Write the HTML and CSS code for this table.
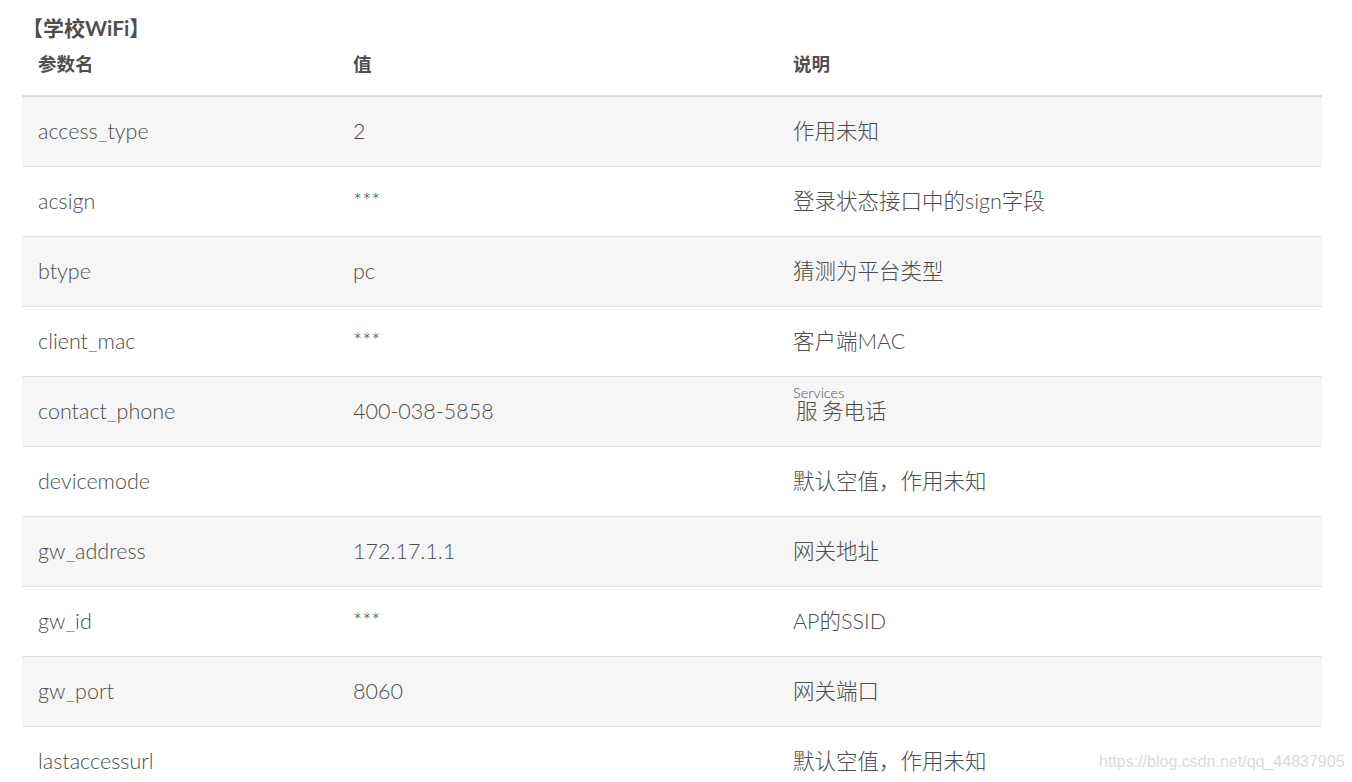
FILE: index.html
```html
<!DOCTYPE html>
<html lang="zh-CN">
<head>
<meta charset="utf-8">
<title>学校WiFi</title>
<link rel="stylesheet" href="styles.css">
</head>
<body>
<div class="page">
  <h3 class="title">【学校WiFi】</h3>
  <table class="params">
    <thead>
      <tr><th class="c1">参数名</th><th class="c2">值</th><th class="c3">说明</th></tr>
    </thead>
    <tbody>
      <tr><td>access_type</td><td>2</td><td>作用未知</td></tr>
      <tr><td>acsign</td><td>***</td><td>登录状态接口中的sign字段</td></tr>
      <tr><td>btype</td><td>pc</td><td>猜测为平台类型</td></tr>
      <tr><td>client_mac</td><td>***</td><td>客户端MAC</td></tr>
      <tr><td>contact_phone</td><td>400-038-5858</td><td><span class="rb"><span class="rt">Services</span><span class="sp">服</span>务</span>电话</td></tr>
      <tr><td>devicemode</td><td></td><td>默认空值，作用未知</td></tr>
      <tr><td>gw_address</td><td>172.17.1.1</td><td>网关地址</td></tr>
      <tr><td>gw_id</td><td>***</td><td>AP的SSID</td></tr>
      <tr><td>gw_port</td><td>8060</td><td>网关端口</td></tr>
      <tr><td>lastaccessurl</td><td></td><td>默认空值，作用未知</td></tr>
    </tbody>
  </table>
  <div class="watermark">https://blog.csdn.net/qq_44837905</div>
</div>
</body>
</html>
```

FILE: styles.css
```css
html, body {
  margin: 0;
  padding: 0;
  background: #fff;
}
body {
  font-family: Lato, "Noto Sans CJK SC", sans-serif;
  color: #4d4d4d;
  overflow: hidden;
}
.page {
  padding: 0 30px 0 22px;
  height: 782px;
  overflow: hidden;
}
.title {
  margin: 0;
  padding-top: 16px;
  height: 24px;
  line-height: 24px;
  font-size: 21px;
  font-weight: 700;
  color: #4f4f4f;
}
.params {
  border-collapse: collapse;
  width: 1300px;
  table-layout: fixed;
}
.params th {
  text-align: left;
  font-size: 18.5px;
  font-weight: 700;
  line-height: 24px;
  padding: 12px 16px 19px;
  border-bottom: 2px solid #dddddd;
  color: #4f4f4f;
}
.c1 { width: 283px; }
.c2 { width: 408px; }
.c3 { width: auto; }
.params td {
  font-size: 21.5px;
  font-weight: 300;
  line-height: 25px;
  height: 25px;
  padding: 22px 16px;
  border-bottom: 1px solid #e2e2e2;
  vertical-align: middle;
  white-space: nowrap;
}
.params tbody tr:nth-child(odd) td {
  background: #f6f6f6;
}
.rb {
  position: relative;
  display: inline-block;
  padding-left: 3px;
}
.rt {
  position: absolute;
  left: 0;
  top: -13px;
  font-size: 14.5px;
  line-height: 14px;
  white-space: nowrap;
}
.sp {
  margin-right: 4.5px;
}
.watermark {
  position: absolute;
  left: 1099px;
  top: 753px;
  font-family: "Liberation Sans", Arial, sans-serif;
  font-size: 16px;
  color: #dadada;
  white-space: nowrap;
}
```
